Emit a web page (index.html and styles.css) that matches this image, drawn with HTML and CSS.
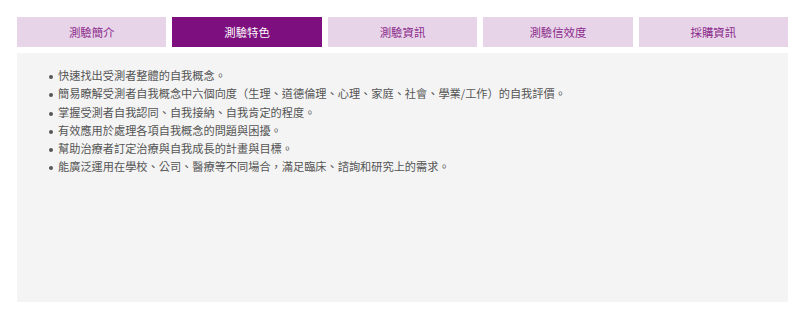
FILE: index.html
```html
<!DOCTYPE html>
<html lang="zh-Hant">

<head>
    <meta charset="UTF-8" />
    <meta name="viewport" content="width=device-width, initial-scale=1.0" />
    <title>測驗特色</title>
    <link rel="stylesheet" href="styles.css">
</head>

<body>
    <div id="wrap">
        <div class="tabs">
            <div class="tab">測驗簡介</div>
            <div class="tab active">測驗特色</div>
            <div class="tab">測驗資訊</div>
            <div class="tab">測驗信效度</div>
            <div class="tab">採購資訊</div>
        </div>

        <div class="panel">
            <ul>
                <li>快速找出受測者整體的自我概念。</li>
                <li>簡易瞭解受測者自我概念中六個向度（生理、道德倫理、心理、家庭、社會、學業/工作）的自我評價。</li>
                <li>掌握受測者自我認同、自我接納、自我肯定的程度。</li>
                <li>有效應用於處理各項自我概念的問題與困擾。</li>
                <li>幫助治療者訂定治療與自我成長的計畫與目標。</li>
                <li>能廣泛運用在學校、公司、醫療等不同場合，滿足臨床、諮詢和研究上的需求。</li>
            </ul>
        </div>
    </div>
</body>

</html>
```

FILE: styles.css
```css
body {
    font-family: "Noto Sans CJK TC", "Noto Sans", sans-serif;
    background-color: #ffffff;
    margin: 0;
    padding: 0;
}

#wrap {
    padding: 17px 12px 0 17px;
}

.tabs {
    display: grid;
    grid-template-columns: repeat(5, 1fr);
    gap: 6px;
}

.tab {
    height: 30px;
    line-height: 30px;
    text-align: center;
    font-size: 11.4px;
    color: #8b2a8b;
    background-color: #e8d4e8;
}

.tab.active {
    background-color: #7d0f7e;
    color: #ffffff;
}

.panel {
    margin-top: 6px;
    height: 249px;
    background-color: #f4f4f4;
    padding: 13px 0 0 0;
    box-sizing: border-box;
}

.panel ul {
    margin: 0;
    padding-left: 40px;
    list-style: none;
}

.panel li {
    font-size: 11.2px;
    line-height: 18.3px;
    color: #555555;
}

.panel li::before {
    content: "";
    display: inline-block;
    width: 4px;
    height: 4px;
    border-radius: 50%;
    background-color: #555555;
    margin-left: -8px;
    margin-right: 5px;
    vertical-align: middle;
}
```
